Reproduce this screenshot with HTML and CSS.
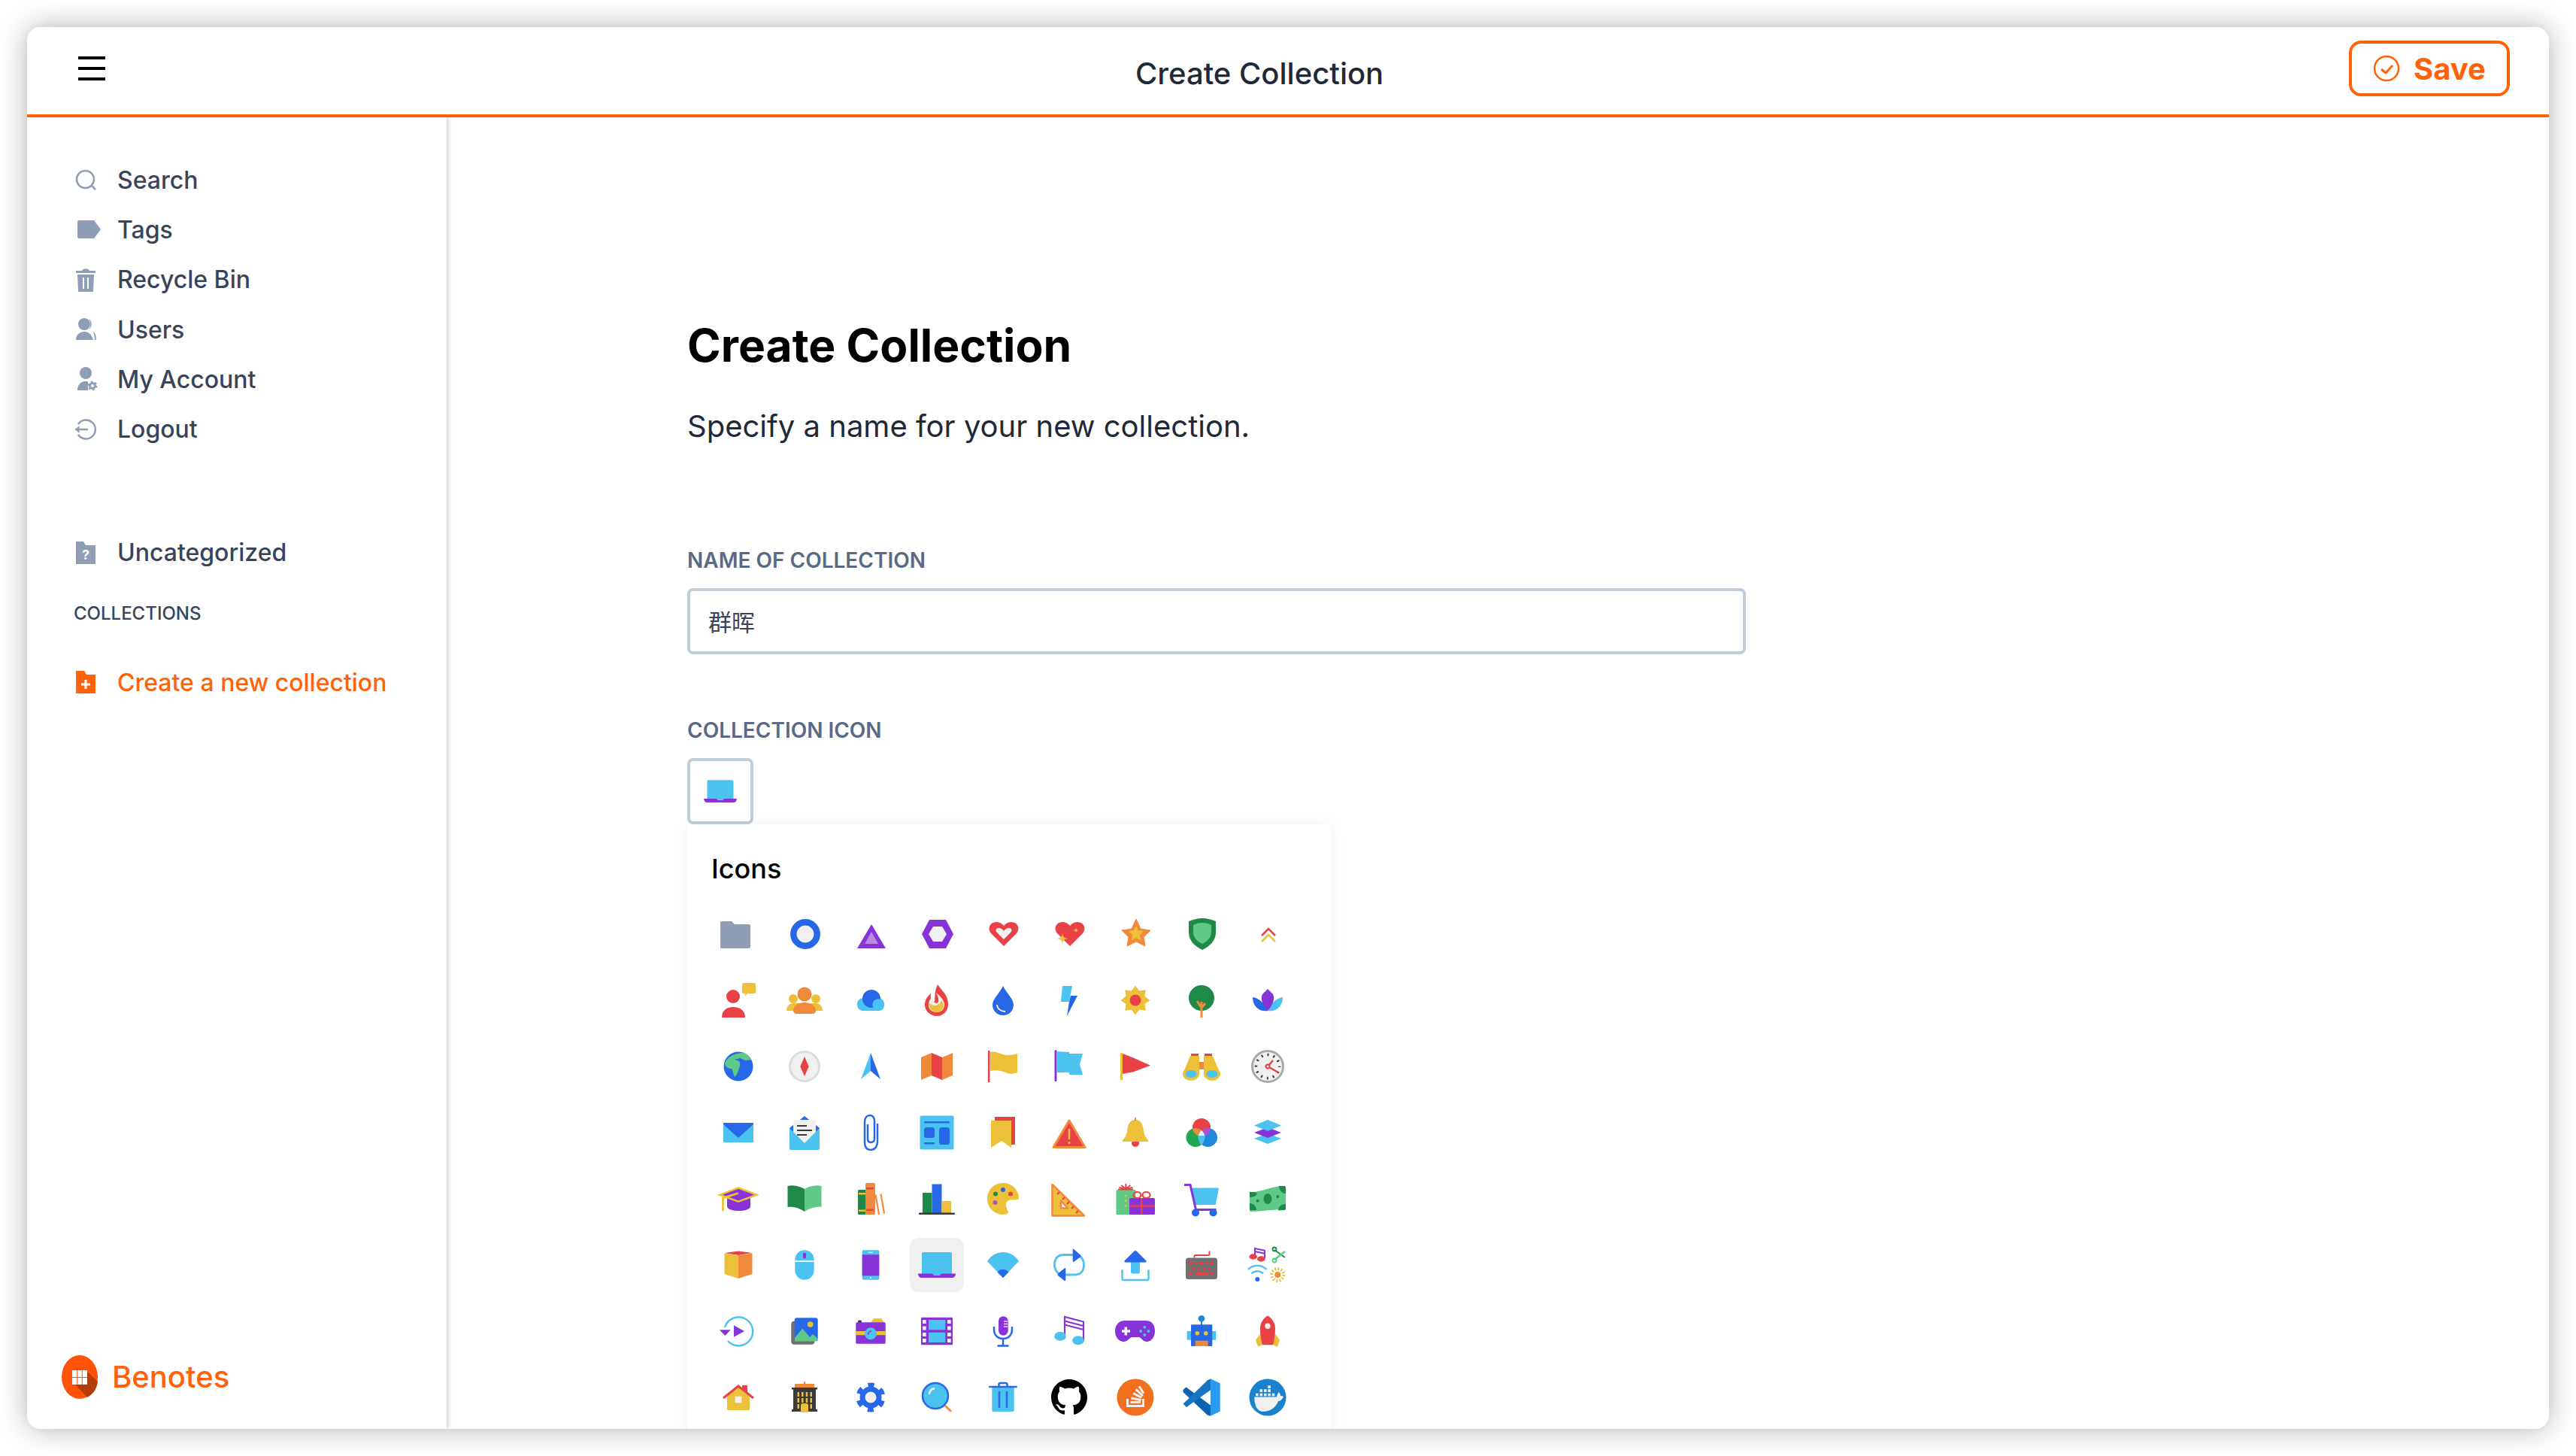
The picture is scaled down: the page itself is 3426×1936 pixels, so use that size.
FILE: index.html
```html
<!DOCTYPE html>
<html lang="en">
<head>
    <meta charset="UTF-8">
    <title>Create Collection</title>
    <link rel="stylesheet" href="styles.css">
</head>
<body>
    <svg class="defs" width="0" height="0">
        <symbol id="laptop" viewBox="0 0 64 64">
            <path d="M14 15h36a2 2 0 0 1 2 2v28H12V17a2 2 0 0 1 2-2z" fill="#4cc2f0"/>
            <path d="M7 43.5h19c1 1.5 2 2 3 2h6c1 0 2-.5 3-2h19c0 3-2 5.500-4 5.500H11c-2 0-4-2.500-4-5.500z" fill="#8833d8"/>
        </symbol>
    </svg>

    <div class="window">
        <header class="topbar">
            <button class="menu-btn"><span></span><span></span><span></span></button>
            <div class="topbar-title">Create Collection</div>
            <button class="save-btn">
                <svg width="36" height="36" viewBox="0 0 36 36" fill="none" stroke="#ff6208"><circle cx="18" cy="18" r="16" stroke-width="2.500"/><path d="M11 19l6 5 9-10" stroke-width="3"/></svg>
                Save
            </button>
        </header>

        <div class="layout">
            <aside class="sidebar">
                <nav class="side-list">
                    <a class="side-item"><svg class="side-icon" viewBox="0 0 32 32" fill="none" stroke="#8f9db5" stroke-width="2.500"><circle cx="15.500" cy="15.500" r="11.500"/><path d="M24 24l5 5"/></svg>Search</a>
                    <a class="side-item"><svg class="side-icon" viewBox="0 0 32 32"><path d="M7 4h20l9 12-9 12H7a2 2 0 0 1-2-2V6a2 2 0 0 1 2-2z" fill="#8f9db5"/></svg>Tags</a>
                    <a class="side-item"><svg class="side-icon" viewBox="0 0 32 32"><path d="M3 4h8c1-2 2-2.500 5-2.500S20 2 21 4h8v3H3z" fill="#8f9db5"/><path d="M5 9h22l-1 23H6zM12 13v15h2V13zM18 13v15h2V13z" fill="#8f9db5" fill-rule="evenodd"/></svg>Recycle Bin</a>
                    <a class="side-item"><svg class="side-icon" viewBox="0 0 32 32" fill="#8f9db5"><circle cx="14" cy="9" r="8"/><path d="M3 30c0-7 5-11 11-11s10 4 12 11z"/><path d="M20 2c5 3 5 11 0 14 3-4 3-10 0-14zM26 19c3 2 4 6 4 11h-2c0-4-1-8-2-11z"/></svg>Users</a>
                    <a class="side-item"><svg class="side-icon" viewBox="0 0 32 32" fill="#8f9db5"><circle cx="16" cy="8" r="8"/><path d="M5 31c0-7 4-12 11-12 1 0 2 0 3 .5V31z"/><circle cx="25" cy="25" r="3.500" fill="none" stroke="#8f9db5" stroke-width="3"/><circle cx="25" cy="25" r="5.500" fill="none" stroke="#8f9db5" stroke-width="2" stroke-dasharray="2.500 3.260"/></svg>My Account</a>
                    <a class="side-item"><svg class="side-icon" viewBox="0 0 32 32" fill="none" stroke="#8f9db5" stroke-width="2.500"><path d="M6 9a12.500 12.500 0 1 1 0 14"/><path d="M19 16H2"/><path d="M7.500 11L2 16l5.500 5" fill="#8f9db5" stroke="none"/></svg>Logout</a>
                </nav>

                <a class="side-item uncategorized"><svg class="side-icon" viewBox="0 0 32 32"><path d="M3 1h10l3 5h13v25H3z" fill="#8f9db5"/><text x="16" y="25" class="folder-mark">?</text></svg>Uncategorized</a>
                <div class="side-heading">COLLECTIONS</div>
                <a class="side-item create-link"><svg class="side-icon" viewBox="0 0 32 32"><path d="M3 1h11l3 5h12v25H3z" fill="#ff6208"/><path d="M16 13v12M10 19h12" stroke="#fff" stroke-width="3"/></svg>Create a new collection</a>

                <div class="brand">
                    <svg class="brand-logo" width="48" height="58" viewBox="0 0 48 58">
                        <ellipse cx="24" cy="29" rx="24" ry="29" fill="#ff5206"/>
                        <path d="M34 22l14 13c-1 9-6 17-14 21L16 37z" fill="#b23c0b"/>
                        <path d="M14 20h20v19H14z" fill="#fff"/>
                        <path d="M20.700 20v19M27.300 20v19M14 29.500h20" stroke="#ff5206" stroke-width="1"/>
                    </svg>
                    <span>Benotes</span>
                </div>
            </aside>

            <main class="content">
                <h1>Create Collection</h1>
                <p class="intro">Specify a name for your new collection.</p>

                <label class="field-label name-label">NAME OF COLLECTION</label>
                <input class="name-input" type="text" value="群晖">

                <label class="field-label icon-label">COLLECTION ICON</label>
                <div class="icon-box"><svg width="56" height="56"><use href="#laptop"/></svg></div>

                <div class="picker">
                    <h3>Icons</h3>
                    <div class="icon-grid">
                        <!-- row 1 -->
                        <div class="cell"><svg viewBox="0 0 64 64"><path d="M10 15h13l4 4h19a2 2 0 0 1 2 2v28a2 2 0 0 1-2 2H10a2 2 0 0 1-2-2V17a2 2 0 0 1 2-2z" fill="#8f9eb5"/></svg></div>
                        <div class="cell"><svg viewBox="0 0 64 64"><circle cx="33" cy="32" r="15.700" fill="#f0f0f0" stroke="#2668e8" stroke-width="8.500"/></svg></div>
                        <div class="cell"><svg viewBox="0 0 64 64"><path d="M33 19l19 32H14z" fill="#8833d8"/><path d="M33 29l9 16H24z" fill="#b98ae0"/></svg></div>
                        <div class="cell"><svg viewBox="0 0 64 64"><path d="M22 13h22l10 19-10 19H22L12 32z" fill="#8833d8"/><path d="M27 22h12l6 10-6 10H27l-6-10z" fill="#f0f0f0"/></svg></div>
                        <div class="cell"><svg viewBox="0 0 64 64"><path d="M33 48L16 31c-5-6-2-15 7-15 4 0 8 2 10 5 2-3 6-5 10-5 9 0 12 9 7 15z" fill="#e84246"/><path d="M33 39l-9-9c-3-3-1-6 2-6s5 1 7 4c2-3 4-4 7-4s5 3 2 6z" fill="#f0f0f0"/></svg></div>
                        <div class="cell"><svg viewBox="0 0 64 64"><path d="M33 48L16 31c-5-6-2-15 7-15 4 0 8 2 10 5 2-3 6-5 10-5 9 0 12 9 7 15z" fill="#e84246"/><path d="M23 30Q23 38 31 38 23 38 23 46 23 38 15 38 23 38 23 30zM41 23Q41 27 45 27 41 27 41 31 41 27 37 27 41 27 41 23z" fill="#edc03a"/></svg></div>
                        <div class="cell"><svg viewBox="0 0 64 64"><path d="M33 12l6 13 13 2-9 9 2 12-12-6-12 6 2-12-9-9 13-2z" fill="#f08a3a" stroke="#f08a3a" stroke-linejoin="round"/><path d="M33 21l3 6 7 1-5 5 1 7-6-3-6 3 1-7-5-5 7-1z" fill="#edc03a"/></svg></div>
                        <div class="cell"><svg viewBox="0 0 64 64"><path d="M33 11c6 0 13 2 18 4v15c0 11-9 19-18 23-9-4-18-12-18-23V15c5-2 12-4 18-4z" fill="#1f8a47"/><path d="M33 17c4 0 9 1 12 3v10c0 7-6 12-12 15-6-3-12-8-12-15V20c3-2 8-3 12-3z" fill="#5fc987"/></svg></div>
                        <div class="cell"><svg viewBox="0 0 64 64" fill="none" stroke-width="2.500"><path d="M24 34l9-9 9 9" stroke="#e84246"/><path d="M24 42l9-9 9 9" stroke="#edc03a"/></svg></div>

                        <!-- row 2 -->
                        <div class="cell"><svg viewBox="0 0 64 64"><circle cx="25" cy="27" r="9" fill="#e84246"/><path d="M10 55c0-10 7-14 15-14s16 4 16 14z" fill="#e84246"/><path d="M39 9h14a2 2 0 0 1 2 2v10a2 2 0 0 1-2 2H44l-3 3v-3h-2a2 2 0 0 1-2-2V11a2 2 0 0 1 2-2z" fill="#edc03a"/></svg></div>
                        <div class="cell"><svg viewBox="0 0 64 64"><circle cx="17" cy="30" r="6" fill="#edc03a"/><circle cx="47" cy="30" r="6" fill="#edc03a"/><path d="M8 46c0-6 4-10 9-10h30c5 0 9 4 9 10z" fill="#edc03a"/><circle cx="32" cy="24" r="9.500" fill="#f08a3a"/><path d="M17 46c0-7 7-11 15-11s15 4 15 11c0 2-2 4-4 4H21c-2 0-4-2-4-4z" fill="#f08a3a"/></svg></div>
                        <div class="cell"><svg viewBox="0 0 64 64"><path d="M22 29h20c5 0 8 4 8 9s-3 8-8 8H22c-5 0-8-4-8-8.500S17 29 22 29z" fill="#4cc2f0"/><circle cx="33" cy="30" r="12" fill="#2668e8"/><circle cx="42" cy="38" r="7.700" fill="#4cc2f0"/></svg></div>
                        <div class="cell"><svg viewBox="0 0 64 64"><path d="M33 11c4 7 14 13 14 26 0 10-7 16-15 16-9 0-16-7-16-15 0-6 3-11 8-15-1 7 1 11 4 11s-1-10 5-23z" fill="#e84246"/><path d="M21 38c0-6 3-8 5-10 0 5 3 8 6 8 4-1 2-8-1-14 5 4 11 10 11 16 0 6-4 10-10 10-7 0-11-4-11-10z" fill="#f4f0ea"/><path d="M22 36c2 2 5 3 8 3 4 0 7-4 8-7 3 4 4 8 2 11-2 4-5 5-8 5-6 0-10-5-10-12z" fill="#edc03a"/></svg></div>
                        <div class="cell"><svg viewBox="0 0 64 64"><path d="M32 13c4 9 14 17 14 25s-6 14-14 14-14-6-14-14 10-16 14-25z" fill="#2668e8"/><path d="M24 38c0 5 5 9 11 9" fill="none" stroke="#f0f0f0" stroke-width="1.800"/></svg></div>
                        <div class="cell"><svg viewBox="0 0 64 64"><path d="M23 13h13l-4 21H21z" fill="#4cc2f0"/><path d="M34 26h9L29 53l3-19z" fill="#2668e8"/></svg></div>
                        <div class="cell"><svg viewBox="0 0 64 64"><path d="M32 12.500l5.200 7 8.600-1.300-1.300 8.600 7 5.200-7 5.200 1.300 8.600-8.600-1.300-5.200 7-5.200-7-8.600 1.300 1.300-8.600-7-5.200 7-5.200-1.300-8.600 8.600 1.300z" fill="#edc03a"/><circle cx="32" cy="32" r="7.500" fill="#e84246"/></svg></div>
                        <div class="cell"><svg viewBox="0 0 64 64"><circle cx="32" cy="29" r="17" fill="#1f8a47"/><path d="M32 34v21M26 33l6 9 5-6" fill="none" stroke="#f08a3a" stroke-width="3"/></svg></div>
                        <div class="cell"><svg viewBox="0 0 64 64"><path d="M12 28c7 1 15 6 20 18-11 2-20-6-20-18z" fill="#2668e8"/><path d="M52 28c-7 1-15 6-20 18 11 2 20-6 20-18z" fill="#4cc2f0"/><path d="M32 17l7 7c3 6 0 14-7 22-7-8-10-16-7-22z" fill="#8833d8"/></svg></div>

                        <!-- row 3 -->
                        <div class="cell"><svg viewBox="0 0 64 64"><circle cx="32" cy="32" r="19.500" fill="#2668e8"/><path d="M14 28c2-6 8-11 16-13l9-1.500c4 1.500 8 5.500 10 10.500-3-2-6 1-8 0-3-1-5-3-8-3-1 2-4 0-6 2 3 1 6 1 7 4 1 5-1 7-2 10-1 4-3 8-5 9-2-4-2-8-4-11-4 0-8-2-9-7z" fill="#5fc987"/></svg></div>
                        <div class="cell"><svg viewBox="0 0 64 64"><circle cx="32" cy="32" r="19.500" fill="#f0f0f0" stroke="#dcdcdc" stroke-width="3"/><path d="M32 19l5.700 13L32 45l-5.700-13z" fill="#e84246"/></svg></div>
                        <div class="cell"><svg viewBox="0 0 64 64"><path d="M32 14L19 49l13-11z" fill="#4cc2f0"/><path d="M32 14l13 35-13-11z" fill="#2668e8"/></svg></div>
                        <div class="cell"><svg viewBox="0 0 64 64"><path d="M11 20l14-6v30l-14 6zM39 20l14-6v30l-14 6z" fill="#f08a3a"/><path d="M25 14l14 6v30l-14-6z" fill="#e84246"/></svg></div>
                        <div class="cell"><svg viewBox="0 0 64 64"><path d="M12 11h2.500v42H12z" fill="#e84246"/><path d="M15 13c9-2 15 4 23 4 5 0 9-1 13-2v25c-4 2-9 2-13 1-8-3-14-5-23-3z" fill="#edc03a"/></svg></div>
                        <div class="cell"><svg viewBox="0 0 64 64"><rect x="12.500" y="10" width="3" height="42" rx="1.500" fill="#8833d8"/><path d="M16 12l16 1v2h18l-4 14 4 14H32v-3H16z" fill="#4cc2f0"/></svg></div>
                        <div class="cell"><svg viewBox="0 0 64 64"><path d="M12 14h3v36h-3z" fill="#edc03a"/><path d="M15 15l15 5.700L52 30.700 30 39l-15 3z" fill="#e84246"/></svg></div>
                        <div class="cell"><svg viewBox="0 0 64 64"><path d="M18 15h10v6H18zM36 15h10v6H36z" fill="#e84246"/><path d="M29 26h6v10h-6z" fill="#f08a3a"/><path d="M17 18h12v24H7z" fill="#edc03a"/><path d="M35 18h12l10 24H35z" fill="#edc03a"/><ellipse cx="18" cy="42" rx="11" ry="9" fill="#edc03a"/><ellipse cx="46" cy="42" rx="11" ry="9" fill="#edc03a"/><ellipse cx="18" cy="42" rx="7.500" ry="5" fill="#4cc2f0"/><ellipse cx="46" cy="42" rx="7.500" ry="5" fill="#4cc2f0"/></svg></div>
                        <div class="cell"><svg viewBox="0 0 64 64"><circle cx="32" cy="32" r="20.500" fill="#f0f0f0" stroke="#aaaaaa" stroke-width="3"/><circle cx="32" cy="32" r="15.500" fill="none" stroke="#3a3a3a" stroke-width="3.500" stroke-dasharray="2 6.120" stroke-dashoffset="1"/><path d="M32 32l7-8M32 32l14 8" stroke="#e84246" stroke-width="2.500"/><circle cx="32" cy="32" r="2.500" fill="#f0f0f0" stroke="#e84246" stroke-width="2"/></svg></div>

                        <!-- row 4 -->
                        <div class="cell"><svg viewBox="0 0 64 64"><rect x="12" y="19" width="40" height="26" rx="1.500" fill="#4cc2f0"/><path d="M13 19h38a1 1 0 0 1 1 1v1L32 39 12 21v-1a1 1 0 0 1 1-1z" fill="#2668e8"/></svg></div>
                        <div class="cell"><svg viewBox="0 0 64 64"><path d="M32 10l20 16v6H12v-6z" fill="#2668e8"/><rect x="17" y="15" width="30" height="32" rx="3" fill="#f0f0f0"/><path d="M22 23h13M22 29h20M22 35h13" stroke="#3a3a3a" stroke-width="2.200"/><path d="M12 26l20 20 20-20v27a2 2 0 0 1-2 2H14a2 2 0 0 1-2-2z" fill="#4cc2f0"/></svg></div>
                        <div class="cell"><svg viewBox="0 0 64 64"><path d="M41 20v24c0 7-4 11-9 11s-8-4-8-11V18c0-6 3-9 7-9s6 3 6 9v22c0 3-2 5-5 5s-4-2-4-5V21" fill="none" stroke="#2668e8" stroke-width="2.500"/></svg></div>
                        <div class="cell"><svg viewBox="0 0 64 64"><rect x="9.500" y="9.500" width="45" height="45" rx="2" fill="#4cc2f0"/><rect x="15" y="17" width="34" height="2.500" rx="1" fill="#2668e8"/><rect x="15" y="25" width="14" height="14" rx="3.500" fill="#2668e8"/><rect x="35" y="25" width="14" height="23" rx="3.500" fill="#2668e8"/><rect x="15" y="45" width="14" height="2.500" rx="1" fill="#2668e8"/></svg></div>
                        <div class="cell"><svg viewBox="0 0 64 64"><path d="M21 11h27v36a1 1 0 0 1-1 1h-4V16H21z" fill="#e84246"/><path d="M17 16h25a1 1 0 0 1 1 1v35l-13-9-14 9V17a1 1 0 0 1 1-1z" fill="#edc03a"/></svg></div>
                        <div class="cell"><svg viewBox="0 0 64 64"><path d="M32 16l21 35.500H11z" fill="#e84246" stroke="#f08a3a" stroke-width="3" stroke-linejoin="round"/><path d="M32 27v14" stroke="#edc03a" stroke-width="2.500"/><circle cx="32" cy="45.500" r="1.500" fill="#edc03a"/></svg></div>
                        <div class="cell"><svg viewBox="0 0 64 64"><circle cx="32" cy="46" r="5" fill="#e84246"/><path d="M32 15c-8 0-10 7-11 15-1 6-3 9-6 12v2h34v-2c-3-3-5-6-6-12-1-8-3-15-11-15z" fill="#edc03a"/><path d="M31 12h2v4h-2z" fill="#f08a3a"/></svg></div>
                        <div class="cell"><svg viewBox="0 0 64 64"><defs><clipPath id="venn-red"><circle cx="32" cy="25" r="12"/></clipPath></defs><circle cx="32" cy="25" r="12" fill="#e84246"/><circle cx="24" cy="38.500" r="12.500" fill="#22a650"/><circle cx="40.500" cy="38.500" r="12.500" fill="#2088d8"/><g clip-path="url(#venn-red)"><circle cx="24" cy="38.500" r="12.500" fill="#f08a3a"/><circle cx="40.500" cy="38.500" r="12.500" fill="#b04fd0"/></g><path d="M32 29c3 3 5 6 4.500 9.500S34 47 32 49c-2-2-4-6-4.500-10.500S29 32 32 29z" fill="#4cc2f0"/><path d="M32 29c2 2 3.500 4 4 7h-8c.5-3 2-5 4-7z" fill="#f0f0f0"/></svg></div>
                        <div class="cell"><svg viewBox="0 0 64 64"><path d="M14 40l18-7 18 7-18 7z" fill="#4cc2f0"/><path d="M14 32l18-7 18 7-18 7z" fill="#8833d8"/><path d="M14 22.500l18-7.500 18 7.500-18 7.500z" fill="#4cc2f0"/></svg></div>

                        <!-- row 5 -->
                        <div class="cell"><svg viewBox="0 0 64 64"><path d="M17 30h31v12c0 4-8 6-15.500 6S17 46 17 42z" fill="#8833d8"/><path d="M32 17.500l24.500 9.200L32 35.700 7.500 26.700z" fill="#8833d8" stroke="#edc03a" stroke-width="2.500"/><path d="M31.700 24.700L11.500 31v17" fill="none" stroke="#edc03a" stroke-width="2.800"/></svg></div>
                        <div class="cell"><svg viewBox="0 0 64 64"><path d="M9.500 15c9-2 17 1 22.500 4v30c-6-4-14-7-22.500-6z" fill="#1f8a47"/><path d="M54.500 15c-9-2-17 1-22.500 4v30c6-4 14-7 22.500-6z" fill="#5fc987"/></svg></div>
                        <div class="cell"><svg viewBox="0 0 64 64"><rect x="15" y="20" width="11" height="33" rx="1.500" fill="#1f8a47"/><path d="M16 24h9v2.500h-9zM16 46.500h9V49h-9z" fill="#edc03a"/><rect x="25" y="11" width="13" height="42" rx="1.500" fill="#f08a3a"/><path d="M26 17h10v2.500H26zM26 45.500h10V48H26z" fill="#e84246"/><path d="M38.500 26.500L43 53M45.500 25.500l4.500 26" stroke="#f08a3a" stroke-width="2.200"/></svg></div>
                        <div class="cell"><svg viewBox="0 0 64 64"><path d="M13 24h12.500v27H13z" fill="#1f8a47"/><path d="M25.500 12.500h13V51h-13z" fill="#2668e8"/><path d="M38.500 35H51v16H38.500z" fill="#edc03a"/><rect x="8" y="50.500" width="48" height="2.500" rx="1" fill="#3a3a3a"/></svg></div>
                        <div class="cell"><svg viewBox="0 0 64 64"><path d="M32 11c12 0 21 9 21 20 0 2-1 2-3 2h-6c-6 0-9 4-8 9 1 4 3 7 3 9-2 1-5 2-7 2-12 0-21-10-21-21 0-12 9-21 21-21z" fill="#edc03a"/><circle cx="32" cy="20" r="3" fill="#2668e8"/><circle cx="22" cy="25.500" r="3" fill="#1f8a47"/><circle cx="42" cy="25.500" r="3" fill="#e84246"/><circle cx="21.500" cy="37" r="3" fill="#b04fd0"/></svg></div>
                        <div class="cell"><svg viewBox="0 0 64 64"><path d="M9.500 13L52 54.500H9.500z" fill="#edc03a" stroke="#f08a3a" stroke-width="2.500" stroke-linejoin="round"/><path d="M21 34.500l9 10h-9z" fill="#fff" stroke="#f08a3a" stroke-width="2.500" stroke-linejoin="round"/><path d="M19 23l-3 3M26 30l-3 3M32 36l-3 3M38 42l-3 3M44 48l-3 3" stroke="#e84246" stroke-width="2.200"/></svg></div>
                        <div class="cell"><svg viewBox="0 0 64 64"><rect x="6.500" y="20" width="26" height="33" rx="1.500" fill="#5fc987"/><path d="M19.300 12v7M19.300 19l-6-5M19.300 19l6-5M19.300 19l-9-2M19.300 19l9-2" stroke="#e84246" stroke-width="2"/><rect x="9" y="18.500" width="20" height="2" fill="#e84246"/><circle cx="19.300" cy="28" r="1.400" fill="#edc03a"/><circle cx="19.300" cy="34.700" r="1.400" fill="#edc03a"/><circle cx="19.300" cy="41.300" r="1.400" fill="#edc03a"/><rect x="24" y="31" width="34" height="22" rx="1.500" fill="#8833d8"/><path d="M40.300 31v22M24 41.700h34" stroke="#e84246" stroke-width="2.200"/><ellipse cx="34.500" cy="27" rx="5" ry="4" fill="none" stroke="#e84246" stroke-width="2.200"/><ellipse cx="46.500" cy="27" rx="5" ry="4" fill="none" stroke="#e84246" stroke-width="2.200"/></svg></div>
                        <div class="cell"><svg viewBox="0 0 64 64"><path d="M17.500 17.500H55l-4.300 22.500H22.500z" fill="#4cc2f0"/><path d="M9 13.500h8l7.500 33h27" fill="none" stroke="#8833d8" stroke-width="3"/><circle cx="24" cy="50.500" r="5" fill="#2668e8"/><circle cx="47.500" cy="50.500" r="5" fill="#2668e8"/></svg></div>
                        <div class="cell"><svg viewBox="0 0 64 64"><path d="M8 23c15 1 28-8 46-8 1 0 2 1 2 2v27c0 1-1 2-2 2-15 0-30 3-45 3-1 0-1-1-1-2z" fill="#5fc987"/><ellipse cx="32" cy="32" rx="5.500" ry="7" fill="#1f8a47"/><circle cx="18.700" cy="34.700" r="2" fill="#1f8a47"/><circle cx="45.300" cy="29" r="2" fill="#1f8a47"/><path d="M8 30v-7h5c4 0 6 2 4 4s-5 3-9 3zM56 25v-8c0-1-1-2-2-2h-7c0 5 4 10 9 10zM8 38v9h9c0-5-4-9-9-9zM56 39v6c0 1-1 2-2 2l-8 .5c0-5 4-8.500 10-8.500z" fill="#1f8a47"/></svg></div>

                        <!-- row 6 -->
                        <div class="cell"><svg viewBox="0 0 64 64"><path d="M13.500 16L32 13.500 50.500 16 32 19z" fill="#e84246"/><path d="M13.500 16.500L32 19v31l-18.500-6z" fill="#edc03a"/><path d="M50.500 16.500L32 19v31l18.500-6z" fill="#f08a3a"/></svg></div>
                        <div class="cell"><svg viewBox="0 0 64 64"><rect x="19.300" y="12.300" width="25.400" height="39.400" rx="12.700" fill="#4cc2f0"/><path d="M19.300 27h25.400" stroke="#e8f4fa" stroke-width="2"/><rect x="30" y="15.700" width="4" height="7.600" rx="1.500" fill="#8833d8"/></svg></div>
                        <div class="cell"><svg viewBox="0 0 64 64"><rect x="20.700" y="12.300" width="22.600" height="39.400" rx="2" fill="#4cc2f0"/><rect x="20.700" y="18.300" width="22.600" height="28" fill="#8833d8"/><path d="M29 15.300h6" stroke="#f0f0f0" stroke-width="1.200"/><circle cx="32" cy="49" r="1" fill="#f0f0f0"/></svg></div>
                        <div class="cell cell-active"><svg viewBox="0 0 64 64"><use href="#laptop"/></svg></div>
                        <div class="cell"><svg viewBox="0 0 64 64"><path d="M11 27c5-8 13-12 21-12s16 4 21 12L32 49z" fill="#4cc2f0"/><path d="M24.500 41.500c2-2.500 4.500-3.800 7.500-3.800s5.500 1.300 7.500 3.800L32 49z" fill="#2668e8"/></svg></div>
                        <div class="cell"><svg viewBox="0 0 64 64"><path d="M37 18.500H25c-8 0-12.500 5-12.500 13S17 45 25 45M27 45h12c8 0 12.500-5 12.500-13S47 18.500 39 18.500" fill="none" stroke="#4cc2f0" stroke-width="2.800"/><path d="M36.700 11.500c0-1 1-1 2 0l8 7c1 1 1 2 0 3l-8 6c-1 1-2 0-2-1zM27.300 36.700c0-1-1-1-2 0l-8 6.500c-1 1-1 2 0 3l8 6.500c1 1 2 0 2-1z" fill="#2668e8"/></svg></div>
                        <div class="cell"><svg viewBox="0 0 64 64"><path d="M14.500 38.500V50a2 2 0 0 0 2 2h31a2 2 0 0 0 2-2V38.500" fill="none" stroke="#4cc2f0" stroke-width="2.500"/><rect x="26" y="27" width="12" height="16.500" rx="2" fill="#4cc2f0"/><path d="M30 14a3 3 0 0 1 4 0l12 12c1 1 1 2.500-1 2.500H19c-2 0-2-1.500-1-2.500z" fill="#2668e8"/></svg></div>
                        <div class="cell"><svg viewBox="0 0 64 64"><rect x="11" y="22.500" width="42" height="28.500" rx="3.500" fill="#707070"/><path d="M22.500 22.500v-2a1.500 1.500 0 0 1 1.500-1.500h17a1.500 1.500 0 0 0 1.500-1.500v-4" fill="none" stroke="#e84246" stroke-width="2"/><path d="M16 27.500h3.500V31H16zM23 27.500h3.500V31H23zM30 27.500h3.500V31H30zM37 27.500h3.500V31H37zM44 27.500h3.500V31H44zM19.500 35H23v3.500h-3.500zM26.500 35H30v3.500h-3.500zM33.500 35H37v3.500h-3.500zM40.500 35H44v3.500h-3.500zM16 42h3.500v3.500H16zM23.300 42h17.400v3.500H23.300zM44 42h3.500v3.500H44z" fill="#e84246"/></svg></div>
                        <div class="cell"><svg viewBox="0 0 64 64"><path d="M15 21V10l13 2.700V23M15 14l13 2.700" fill="none" stroke="#8833d8" stroke-width="2"/><ellipse cx="12.700" cy="21" rx="5.300" ry="3.700" fill="#e84246"/><ellipse cx="23.300" cy="24" rx="5.300" ry="3.700" fill="#e84246"/><path d="M41 12l14 10" stroke="#1f8a47" stroke-width="2"/><path d="M41 25l14-11" stroke="#5fc987" stroke-width="2.500"/><circle cx="41" cy="11" r="2.500" fill="none" stroke="#1f8a47" stroke-width="1.800"/><circle cx="41" cy="26" r="2.500" fill="none" stroke="#5fc987" stroke-width="1.800"/><circle cx="18.300" cy="51" r="3" fill="#2668e8"/><path d="M10.500 43.500a11 11 0 0 1 15.600 0M6 38a17.500 17.500 0 0 1 24.600 0" fill="none" stroke="#4cc2f0" stroke-width="2.300"/><circle cx="45.300" cy="45" r="4" fill="#f08a3a"/><circle cx="45.300" cy="45" r="8" fill="none" stroke="#edc03a" stroke-width="4" stroke-dasharray="1.800 2.390"/></svg></div>

                        <!-- row 7 -->
                        <div class="cell"><svg viewBox="0 0 64 64"><path d="M14 27a19 19 0 1 1 4 18" fill="none" stroke="#4cc2f0" stroke-width="2.500"/><path d="M7 30.300h14.700L14.300 38zM26 24.300L40 32l-14 7.700z" fill="#8833d8"/></svg></div>
                        <div class="cell"><svg viewBox="0 0 64 64"><rect x="14.300" y="18.700" width="31" height="31" rx="4" fill="#707070"/><rect x="18.700" y="14.300" width="31" height="31" rx="3" fill="#2668e8"/><circle cx="39.700" cy="23" r="3.800" fill="#edc03a"/><path d="M19 41l10.300-12.500L39 40l4-4 7 6-3.500 3.500H19z" fill="#5fc987"/></svg></div>
                        <div class="cell"><svg viewBox="0 0 64 64"><path d="M32 21l3.700-5.700h11L50 21z" fill="#edc03a"/><rect x="15" y="17.500" width="5" height="4" rx="1.500" fill="#3a3a3a"/><rect x="12.300" y="20.300" width="39.400" height="28.400" rx="1.500" fill="#8833d8"/><path d="M12.300 32h39.400v5.300H12.300z" fill="#edc03a"/><circle cx="32" cy="35.300" r="8" fill="#4cc2f0"/><path d="M29 37c-1-3 1-5 4-5" fill="none" stroke="#8833d8" stroke-width="1.500"/></svg></div>
                        <div class="cell"><svg viewBox="0 0 64 64"><rect x="11" y="13.700" width="42" height="36.600" rx="1" fill="#8833d8"/><path d="M21 17h22.300v13.300H21zM21 33.700h22.300V47H21z" fill="#4cc2f0"/><path d="M13 17h4.700v5H13zM13 25.500h4.700v5H13zM13 34h4.700v5H13zM13 42h4.700v5H13zM46 17h4.700v5H46zM46 25.500h4.700v5H46zM46 34h4.700v5H46zM46 42h4.700v5H46z" fill="#f0f0f0"/></svg></div>
                        <div class="cell"><svg viewBox="0 0 64 64"><rect x="26" y="12.300" width="12.700" height="25.400" rx="6.300" fill="#8833d8"/><path d="M33 19h5M33 22.500h5M33 26h5" stroke="#e4d4f5" stroke-width="1.500"/><path d="M20 26v4c0 7 5 12 12 12s12-5 12-12v-4M32 42v9.500M24.500 51.500h15" fill="none" stroke="#2668e8" stroke-width="2.500"/></svg></div>
                        <div class="cell"><svg viewBox="0 0 64 64"><path d="M26 38V13l25 6.500V44M26 18.500l25 6.500M26 23.500L51 30" fill="none" stroke="#8833d8" stroke-width="2.200"/><ellipse cx="20" cy="38.700" rx="7.800" ry="6" fill="#4cc2f0"/><ellipse cx="44" cy="44.300" rx="7.800" ry="6" fill="#4cc2f0"/></svg></div>
                        <div class="cell"><svg viewBox="0 0 64 64"><path d="M18 18h28c8 0 12 6 12 14s-5 14-11 14c-4 0-6-4-10-6H27c-4 2-6 6-10 6-7 0-12-6-12-14s5-14 13-14z" fill="#8833d8"/><path d="M14 32h11M19.300 26.500v11" stroke="#f0f0f0" stroke-width="3.500"/><circle cx="44.300" cy="26.800" r="2" fill="#4cc2f0"/><circle cx="44.300" cy="37" r="2" fill="#4cc2f0"/><circle cx="39.200" cy="32" r="2" fill="#4cc2f0"/><circle cx="49.500" cy="32" r="2" fill="#4cc2f0"/></svg></div>
                        <div class="cell"><svg viewBox="0 0 64 64"><path d="M12.700 32H18v11.700h-5.300zM46 32h5.300v11.700H46z" fill="#4cc2f0"/><circle cx="32" cy="15.300" r="4.300" fill="#2088d8"/><path d="M32 18v6" stroke="#2088d8" stroke-width="2"/><rect x="18" y="23.300" width="28.300" height="28.700" rx="1" fill="#2668e8"/><circle cx="26.300" cy="34.700" r="2.800" fill="#edc03a"/><circle cx="37.700" cy="34.700" r="2.800" fill="#edc03a"/><rect x="23.700" y="44.700" width="17" height="7.300" fill="#f08a3a"/></svg></div>
                        <div class="cell"><svg viewBox="0 0 64 64"><path d="M22.700 34.700L16 43.700 19.300 53l8-4.300zM41.300 34.700L48 43.700 44.700 53l-8-4.300z" fill="#edc03a"/><path d="M32 11.300c6 4 10 10 10 17 0 8-1 15-3 22H25c-2-7-3-14-3-22 0-7 4-13 10-17z" fill="#e84246"/><circle cx="32" cy="25.300" r="3.700" fill="#f0f0f0"/></svg></div>

                        <!-- row 8 -->
                        <div class="cell"><svg viewBox="0 0 64 64"><path d="M17 31l15-14 15 14v17a1 1 0 0 1-1 1H18a1 1 0 0 1-1-1z" fill="#edc03a"/><path d="M37 16h7v11l-7-6z" fill="#e84246"/><path d="M12 33l20-16 20 16" fill="none" stroke="#e84246" stroke-width="3"/><rect x="27.700" y="30.700" width="8.600" height="8.600" fill="#f0f0f0"/></svg></div>
                        <div class="cell"><svg viewBox="0 0 64 64"><path d="M19 14h26v5H19z" fill="#f08a3a"/><path d="M31 11h2v4h-2z" fill="#f08a3a"/><path d="M15 19h34v2.500h-2V48h2v3H15v-3h2V21.500h-2z" fill="#3a3a3a"/><path d="M22.500 25h2.500v6h-2.500zM28 25h2.500v6H28zM33.700 25h2.500v6h-2.500zM39.500 25H42v6h-2.500zM22.500 33h2.500v6h-2.500zM28 33h2.500v6H28zM33.700 33h2.500v6h-2.500zM39.500 33H42v6h-2.500zM22.500 41h2.500v6h-2.500zM39.500 41H42v6h-2.500z" fill="#edc03a"/><path d="M27 43a3 3 0 0 1 3-3h4a3 3 0 0 1 3 3v9H27z" fill="#edc03a"/></svg></div>
                        <div class="cell"><svg viewBox="0 0 64 64"><circle cx="32" cy="32" r="11" fill="#f0f0f0" stroke="#2668e8" stroke-width="7"/><circle cx="32" cy="32" r="16.500" fill="none" stroke="#2668e8" stroke-width="6" stroke-dasharray="8 9.280" stroke-dashoffset="-4.640"/></svg></div>
                        <div class="cell"><svg viewBox="0 0 64 64"><path d="M43 43l8 8" stroke="#f08a3a" stroke-width="2.800"/><circle cx="30" cy="30" r="17" fill="#4cc2f0" stroke="#2668e8" stroke-width="2.500"/><path d="M22 28c0-4 3-7 7-8" fill="none" stroke="#f0f0f0" stroke-width="2.500"/></svg></div>
                        <div class="cell"><svg viewBox="0 0 64 64"><path d="M17.300 18h29.400v31a2 2 0 0 1-2 2H19.300a2 2 0 0 1-2-2z" fill="#4cc2f0"/><path d="M13.300 18h37.400M26.500 17v-2a2 2 0 0 1 2-2h7a2 2 0 0 1 2 2v2M27 24v22M37 24v22" fill="none" stroke="#2668e8" stroke-width="2.600"/></svg></div>
                        <div class="cell"><svg viewBox="0 0 64 64"><g transform="translate(8 8) scale(3)"><path d="M8 0C3.580 0 0 3.580 0 8c0 3.540 2.290 6.530 5.470 7.590.4.070.55-.17.55-.38 0-.19-.01-.82-.01-1.490-2.010.37-2.530-.49-2.690-.94-.09-.23-.48-.94-.82-1.130-.28-.15-.68-.52-.01-.53.63-.01 1.080.58 1.230.82.72 1.210 1.870.87 2.330.66.070-.52.28-.87.51-1.070-1.780-.2-3.640-.89-3.640-3.950 0-.87.31-1.590.82-2.150-.08-.2-.36-1.020.08-2.120 0 0 .67-.21 2.200.82.64-.18 1.320-.27 2-.27.68 0 1.360.09 2 .27 1.530-1.040 2.200-.82 2.200-.82.44 1.100.16 1.920.08 2.120.51.56.82 1.270.82 2.150 0 3.070-1.870 3.750-3.650 3.950.29.25.54.73.54 1.480 0 1.070-.01 1.930-.01 2.200 0 .21.15.46.55.38A8.013 8.013 0 0 0 16 8c0-4.420-3.580-8-8-8z" fill="#000"/></g></svg></div>
                        <div class="cell"><svg viewBox="0 0 64 64"><circle cx="32" cy="32" r="24.500" fill="#f26f1d"/><path d="M21.500 34v9.500h21V34" fill="none" stroke="#f0f0f0" stroke-width="3"/><path d="M25.500 38.500h13.500M26.500 33l13.200 2.700M29.300 26.700l11 5.600M32.700 21.300l9.300 8.700M37 17.300l6 9.400" stroke="#f0f0f0" stroke-width="3"/></svg></div>
                        <div class="cell"><svg viewBox="0 0 64 64"><path d="M7.500 22l4-3.500L44 42.500v14.200l-4-1L7.500 25z" fill="#0f62b0"/><path d="M7.500 40.700l4.500 4.300L44 22.300V7.300l-4 2z" fill="#1575c2"/><path d="M44 7.300l12.700 6v37.400L44 56.700z" fill="#2a9aec"/></svg></div>
                        <div class="cell"><svg viewBox="0 0 64 64"><circle cx="32" cy="32" r="24.500" fill="#1a82cc"/><path d="M14.300 31.500H44c.5-3.500 2-5.500 3-6.500 1 2 2 3 2 5 1 0 3 0 4 1-2 5-5 6-7 6-3 9-12 14-20 14-7 0-12-7-11.700-19.500z" fill="#f0f0f0"/><path d="M16 26.700h3.600v3.600H16zM21.500 26.700h3.600v3.600h-3.600zM27 26.700h3.600v3.600H27zM32.300 26.700h3.600v3.600h-3.600zM37.700 26.700h3.600v3.600h-3.600zM21.500 21.300h3.600v3.600h-3.600zM27 21.300h3.600v3.600H27zM32.300 21.300h3.600v3.600h-3.600zM32.300 16.300h3.600v3.600h-3.600z" fill="#f0f0f0"/></svg></div>
                    </div>
                </div>
            </main>
        </div>
    </div>
</body>
</html>
```

FILE: styles.css
```css
* {
    margin: 0;
    padding: 0;
    box-sizing: border-box;
}

html, body {
    height: 100%;
    overflow: hidden;
}

body {
    font-family: Inter, "Noto Sans CJK SC", sans-serif;
    background: #fff;
    padding: 36px;
    color: #39435a;
}

.defs {
    position: absolute;
}

.window {
    height: 1864px;
    background: #fff;
    border-radius: 18px;
    overflow: hidden;
    box-shadow: 0 0 36px rgba(0, 0, 0, 0.32);
    display: flex;
    flex-direction: column;
}

.topbar {
    height: 120px;
    flex: none;
    display: flex;
    align-items: center;
    padding: 0 52px 6px 68px;
    border-bottom: 4px solid #ff6208;
    position: relative;
    z-index: 2;
    background: #fff;
}

.menu-btn {
    width: 36px;
    height: 32px;
    background: none;
    border: none;
    display: flex;
    flex-direction: column;
    justify-content: space-between;
}

.menu-btn span {
    height: 4px;
    background: #000;
}

.topbar-title {
    margin-left: 1370px;
    margin-top: 12px;
    font-size: 40px;
    font-weight: 500;
    color: #1f2937;
}

.save-btn {
    margin-left: auto;
    width: 214px;
    height: 74px;
    background: #fff;
    border: 4px solid #ff6208;
    border-radius: 16px;
    color: #ff6208;
    font-family: inherit;
    font-size: 40px;
    font-weight: 700;
    display: flex;
    align-items: center;
    justify-content: center;
    gap: 18px;
}

.layout {
    flex: 1;
    display: flex;
    min-height: 0;
}

.sidebar {
    width: 558px;
    flex: none;
    padding-top: 50px;
    display: flex;
    flex-direction: column;
    box-shadow: 2px 0 6px rgba(0, 0, 0, 0.2);
    font-size: 32px;
    font-weight: 500;
}

.side-list {
    display: flex;
    flex-direction: column;
}

.side-item {
    height: 66.3px;
    flex: none;
    display: flex;
    align-items: center;
    gap: 26px;
    padding-left: 62px;
}

.side-icon {
    width: 32px;
    height: 32px;
    flex: none;
    overflow: visible;
}

.folder-mark {
    fill: #fff;
    font-size: 18px;
    font-weight: 700;
    text-anchor: middle;
}

.uncategorized {
    margin-top: 98px;
}

.side-heading {
    margin: 22px 0 0 62px;
    height: 52px;
    line-height: 52px;
    font-size: 24px;
    font-weight: 500;
}

.create-link {
    margin-top: 32px;
    color: #ff6208;
}

.brand {
    margin-top: auto;
    height: 110px;
    padding: 0 0 29px 46px;
    display: flex;
    align-items: center;
    gap: 19px;
    font-size: 40px;
    font-weight: 500;
    color: #ff6208;
}

.content {
    flex: 1;
    padding: 267px 0 0 320px;
    overflow: hidden;
}

.content h1 {
    font-size: 60.5px;
    line-height: 72px;
    font-weight: 700;
    color: #000;
}

.intro {
    margin-top: 44px;
    font-size: 40px;
    line-height: 56px;
    color: #1f2937;
}

.field-label {
    display: block;
    font-size: 28px;
    line-height: 36px;
    font-weight: 600;
    color: #5a6a85;
}

.name-label {
    margin-top: 132px;
}

.name-input {
    display: block;
    margin-top: 19px;
    width: 1408px;
    height: 88px;
    border: 4px solid #bfccda;
    border-radius: 8px;
    padding: 0 24px 2px;
    font-family: inherit;
    font-size: 31px;
    color: #39435a;
    outline: none;
}

.icon-label {
    margin-top: 83px;
}

.icon-box {
    margin-top: 19px;
    width: 88px;
    height: 88px;
    border: 4px solid #bfccda;
    border-radius: 8px;
    display: flex;
    align-items: center;
    justify-content: center;
}

.picker {
    width: 856px;
    padding: 37px 32px 40px;
    background: #fff;
    box-shadow: 0 0 20px rgba(0, 0, 0, 0.06);
}

.picker h3 {
    font-size: 36px;
    line-height: 44px;
    font-weight: 500;
    color: #000;
    margin-bottom: 29px;
}

.icon-grid {
    display: grid;
    grid-template-columns: repeat(9, 72px);
    grid-auto-rows: 72px;
    gap: 16px;
}

.cell {
    display: flex;
    align-items: center;
    justify-content: center;
    border-radius: 12px;
}

.cell svg {
    width: 64px;
    height: 64px;
}

.cell-active {
    background: #f0f0f0;
}
```
